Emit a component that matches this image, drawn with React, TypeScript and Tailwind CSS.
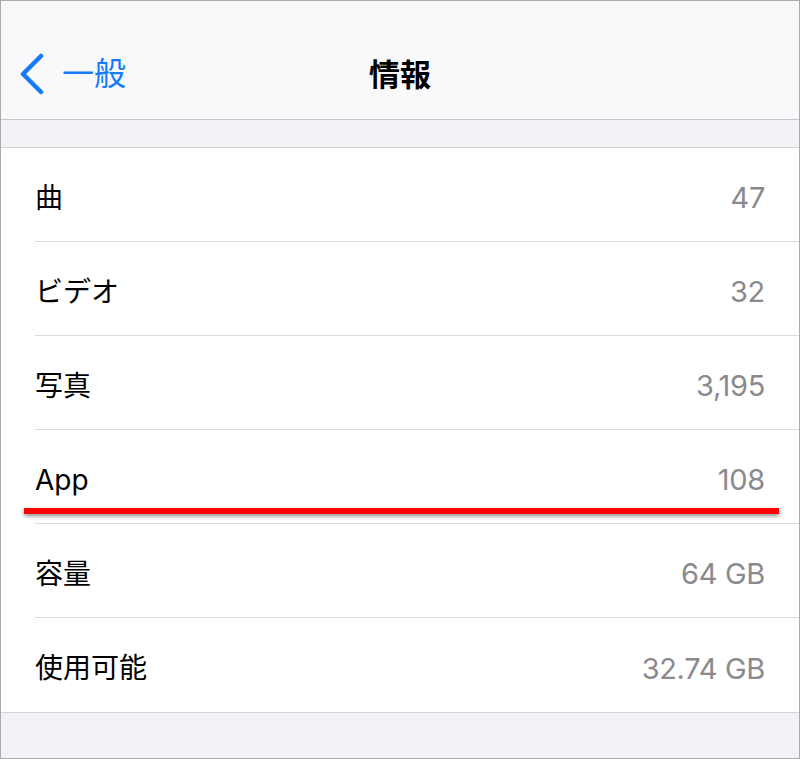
import React from "react";

const rows: [string, string][] = [
  ["曲", "47"],
  ["ビデオ", "32"],
  ["写真", "3,195"],
  ["App", "108"],
  ["容量", "64 GB"],
  ["使用可能", "32.74 GB"],
];

export default function App() {
  return (
    <div
      className="relative w-[800px] h-[759px] border border-[#ababab] bg-[#f2f2f7] flex flex-col overflow-hidden"
      style={{ fontFamily: 'Inter, "Noto Sans CJK JP", sans-serif' }}
    >
      <div className="h-[119px] shrink-0 bg-[#f9f9fb] border-b border-[#c6c6ca] relative flex items-center pt-[28px]">
        <div className="flex items-center pl-[17px] gap-[16px] text-[#137cf6]">
          <svg width="28" height="42" viewBox="0 0 28 42" className="shrink-0">
            <path d="M23 3 L5 21 L23 39" fill="none" stroke="#137cf6" strokeWidth="4.5" strokeLinecap="round" strokeLinejoin="round" />
          </svg>
          <span className="text-[32px] leading-none">一般</span>
        </div>
        <div className="absolute left-0 right-0 top-[28px] bottom-0 flex items-center justify-center">
          <span className="text-[31px] font-bold text-black leading-none">情報</span>
        </div>
      </div>
      <div className="h-[27px] shrink-0" />
      <div className="bg-white border-t border-b border-[#d4d4d8] shrink-0">
        {rows.map(([label, value], i) => (
          <div key={label} className="pl-[34px]">
            <div
              className={`h-[94px] flex items-center justify-between pr-[34px] pt-[6px] ${i < rows.length - 1 ? "border-b border-[#dcdcdf]" : ""}`}
            >
              <span className="text-[28px] leading-none text-black">{label}</span>
              <span className="text-[29px] leading-none tracking-[-0.3px] text-[#8a8a8e]">{value}</span>
            </div>
          </div>
        ))}
      </div>
      <div className="flex-1" />
      <div className="absolute left-[23px] top-[507px] w-[755px] h-[6px] bg-[#ff0000] shadow-[0_2px_4px_rgba(0,0,0,0.45)]" />
    </div>
  );
}
